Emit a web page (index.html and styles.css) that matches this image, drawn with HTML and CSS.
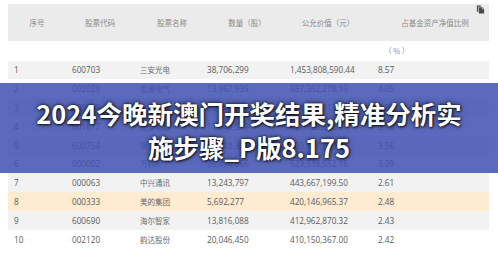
FILE: index.html
```html
<!DOCTYPE html>
<html lang="zh-CN">
<head>
<meta charset="utf-8">
<title>2024今晚新澳门开奖结果</title>
<link rel="stylesheet" href="styles.css">
</head>
<body>
<div class="page">
  <div class="table">
    <div class="thead">
      <div class="th">序号</div>
      <div class="th">股票代码</div>
      <div class="th th-shift">股票名称</div>
      <div class="th th-shift">数量（股）</div>
      <div class="th">公允价值（元）</div>
      <div class="th th-shift">占基金资产净值比例</div>
    </div>
    <div class="unit-row"><span class="unit">（ % ）</span></div>
    <div class="row odd"><div>1</div><div>600703</div><div class="cn">三安光电</div><div>38,706,299</div><div>1,453,808,590.44</div><div>8.57</div></div>
    <div class="row"><div>2</div><div>002028</div><div class="cn">思源电气</div><div>13,967,939</div><div>687,362,278.19</div><div>4.05</div></div>
    <div class="row odd"><div>3</div><div>600009</div><div class="cn">上海机场</div><div>10,541,700</div><div>654,182,317.62</div><div>3.86</div></div>
    <div class="row"><div>4</div><div>601877</div><div class="cn">正泰电器</div><div>11,648,519</div><div>627,738,688.91</div><div>3.70</div></div>
    <div class="row odd"><div>5</div><div>600754</div><div class="cn">锦江酒店</div><div>13,418,336</div><div>603,917,673.76</div><div>3.56</div></div>
    <div class="row"><div>6</div><div>000002</div><div class="cn">万科A</div><div>26,494,866</div><div>523,538,552.16</div><div>3.09</div></div>
    <div class="row odd"><div>7</div><div>000063</div><div class="cn">中兴通讯</div><div>13,243,797</div><div>443,667,199.50</div><div>2.61</div></div>
    <div class="row hover"><div>8</div><div>000333</div><div class="cn">美的集团</div><div>5,692,277</div><div>420,146,965.37</div><div>2.48</div></div>
    <div class="row odd"><div>9</div><div>600690</div><div class="cn">海尔智家</div><div>13,816,088</div><div>412,962,870.32</div><div>2.43</div></div>
    <div class="row"><div>10</div><div>002120</div><div class="cn">韵达股份</div><div>20,046,450</div><div>410,150,367.00</div><div>2.42</div></div>
  </div>

  <svg class="copy-icon" viewBox="0 0 10 10" width="9" height="9" aria-hidden="true">
    <path d="M1 0.5h4.5v1.5H2.5v5.5H1z" fill="#4a4a4a"/>
    <path d="M3.2 2.6h4l1.8 1.8v5.1H3.2z" fill="#4a4a4a"/>
    <path d="M7 2.8v1.8h1.8" fill="#ddd"/>
  </svg>

  <div class="banner">
    <div class="title">2024今晚新澳门开奖结果,精准分析实<br>施步骤_P版8.175</div>
  </div>
</div>
</body>
</html>
```

FILE: styles.css
```css
* { box-sizing: border-box; }

html, body {
  margin: 0;
  padding: 0;
  background: #ffffff;
}

.page {
  position: relative;
  width: 498px;
  height: 259px;
  overflow: hidden;
  font-family: "Open Sans", "Noto Sans CJK SC", sans-serif;
}

.table {
  margin: 4px 0 0 8px;
  width: 481px;
}

.thead,
.unit-row,
.row {
  display: grid;
  grid-template-columns: 58px 68px 67px 83px 88px 117px;
}

.thead {
  height: 37px;
  background: #ebebeb;
  align-items: center;
}

.th {
  text-align: center;
  font-family: "Noto Sans CJK SC", sans-serif;
  font-size: 7.5px;
  color: #8a8a8a;
  white-space: nowrap;
}

.th-shift {
  padding-left: 9px;
}

.unit-row {
  height: 19.6px;
  align-items: center;
}

.unit {
  grid-column: 6;
  padding-left: 12px;
  font-family: "Noto Sans CJK SC", sans-serif;
  font-size: 7.5px;
  color: #8a8a8a;
  white-space: pre;
}

.row {
  height: 18.8px;
  align-items: center;
  font-size: 8.2px;
  color: #5a5a5a;
}

.row > div {
  padding-left: 6px;
  white-space: nowrap;
}

.row .cn {
  font-family: "Noto Sans CJK SC", sans-serif;
  font-size: 7.5px;
  color: #6a6a6a;
}

.row.odd { background: #f2f2f2; }
.row.hover { background: #fdebd2; }

.copy-icon {
  position: absolute;
  top: 5px;
  left: 476px;
}

.banner {
  position: absolute;
  left: 0;
  top: 83px;
  width: 498px;
  height: 90px;
  background: rgba(64, 82, 178, 0.86);
  display: flex;
  align-items: center;
  justify-content: center;
}

.title {
  font-family: "Noto Sans CJK SC", sans-serif;
  font-weight: 700;
  font-size: 25.5px;
  line-height: 34px;
  color: #ffffff;
  text-align: center;
  white-space: nowrap;
  text-shadow: 0 0 3px rgba(0, 0, 0, 0.85), 0 0 6px rgba(0, 0, 0, 0.5), 1px 1px 2px rgba(0, 0, 0, 0.6);
  margin-top: 4px;
}
```
